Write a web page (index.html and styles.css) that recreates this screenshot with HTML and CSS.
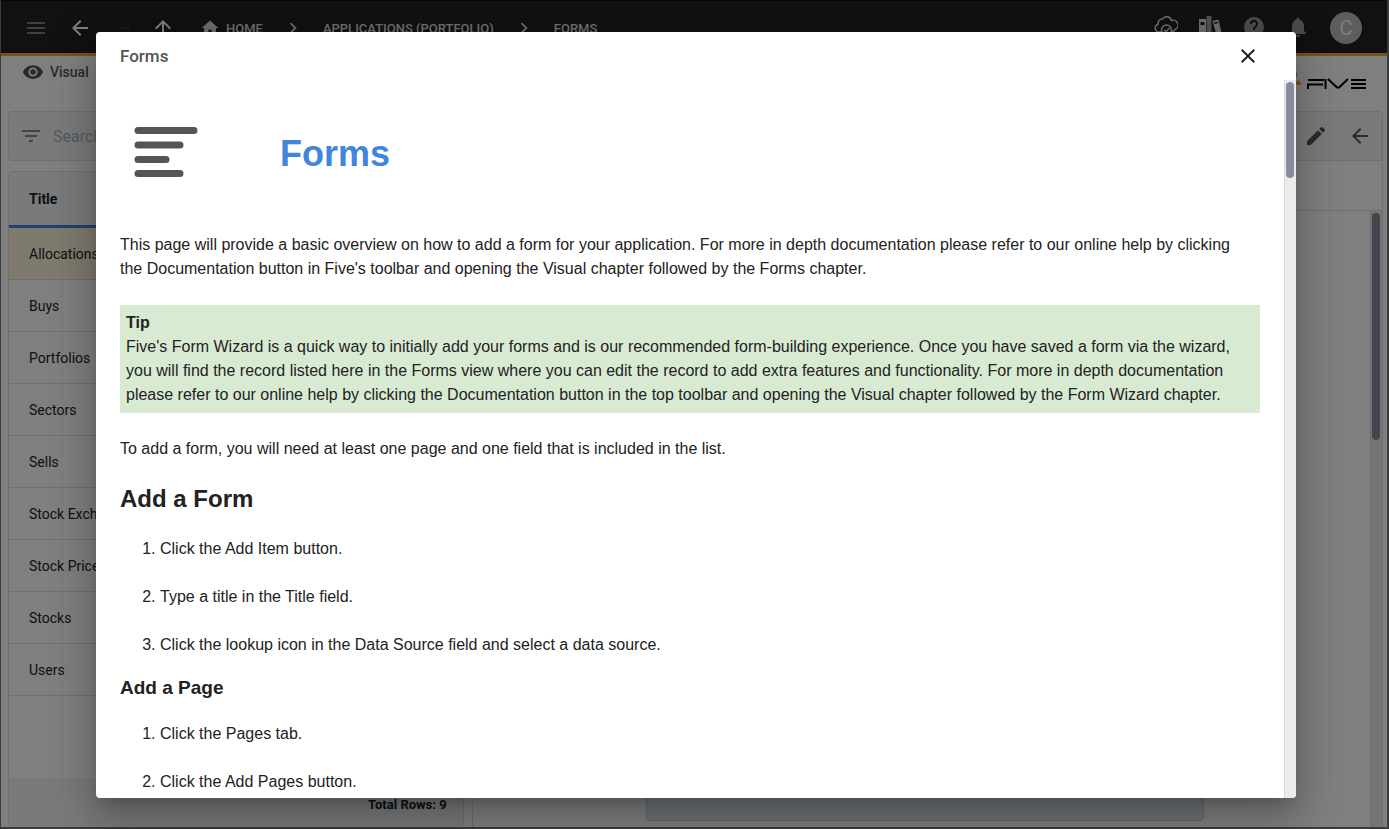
FILE: index.html
```html
<!DOCTYPE html>
<html lang="en">
    <head>
        <meta charset="utf-8">
        <title>Five - Forms</title>
        <link rel="stylesheet" href="styles.css">
    </head>

    <body>
        <div class="app">
            <header class="topbar">
                <button class="icon-btn menu" aria-label="Menu"><svg width="24" height="24" viewBox="0 0 24 24"><path d="M3 6h18v2H3zm0 5h18v2H3zm0 5h18v2H3z"/></svg></button>
                <button class="icon-btn" aria-label="Back"><svg width="24" height="24" viewBox="0 0 24 24"><path d="M20 11H7.8l5.6-5.6L12 4l-8 8 8 8 1.4-1.4L7.8 13H20z"/></svg></button>
                <button class="icon-btn off" aria-label="Forward"><svg width="24" height="24" viewBox="0 0 24 24"><path d="M4 11h12.2l-5.6-5.6L12 4l8 8-8 8-1.4-1.4 5.6-5.6H4z"/></svg></button>
                <button class="icon-btn up" aria-label="Up"><svg width="24" height="24" viewBox="0 0 24 24"><path d="M11 20V7.8l-5.6 5.6L4 12l8-8 8 8-1.4 1.4L13 7.8V20z"/></svg></button>
                <nav class="crumbs">
                    <a href="#"><svg width="20" height="20" viewBox="0 0 24 24"><path d="M10 20v-6h4v6h5v-8h3L12 3 2 12h3v8z"/></svg>HOME</a>
                    <svg width="22" height="22" viewBox="0 0 24 24"><path d="M8.6 16.6 13.2 12 8.6 7.4 10 6l6 6-6 6z"/></svg>
                    <a href="#">APPLICATIONS (PORTFOLIO)</a>
                    <svg width="22" height="22" viewBox="0 0 24 24"><path d="M8.6 16.6 13.2 12 8.6 7.4 10 6l6 6-6 6z"/></svg>
                    <a href="#">FORMS</a>
                </nav>
                <div class="tools">
                    <button class="icon-btn light" aria-label="Deploy"><svg width="24" height="24" viewBox="0 0 24 24"><g fill="none" stroke="currentColor" stroke-width="1.5"><path d="M7 18H5a4 4 0 0 1-1-7.800A4.500 4.500 0 0 1 8.500 5a5 5 0 0 1 9 1.500 4.500 4.500 0 0 1 3.500 9q-1 2-3 2.500"/><circle cx="12.500" cy="16" r="5"/><path d="m10 16 2 2 3.500-4"/></g></svg></button>
                    <button class="icon-btn light" aria-label="Documentation"><svg width="24" height="24" viewBox="0 0 24 24"><path fill-rule="evenodd" d="M1 5h7v18H1zm1.500 3v3h4V8zM14.500 7l6-1.500L24 21l-5 1.500zM16 8.500l.4 1.500 4-1-.4-1.500z"/><path d="M8.500 2h5v20h-5z" opacity=".7"/></svg></button>
                    <button class="icon-btn dim" aria-label="Help"><svg width="24" height="24" viewBox="0 0 24 24"><path d="M12 2a10 10 0 1 0 0 20 10 10 0 0 0 0-20zm1 17h-2v-2h2zm2.100-7.700-.9.900C13.500 12.900 13 13.500 13 15h-2v-.5c0-1.100.5-2.100 1.200-2.800l1.200-1.300A2 2 0 1 0 10 9H8a4 4 0 1 1 7.100 2.300z"/></svg></button>
                    <button class="icon-btn dim" aria-label="Notifications"><svg width="24" height="24" viewBox="0 0 24 24"><path d="M12 22a2 2 0 0 0 2-2h-4a2 2 0 0 0 2 2zm6-6v-5c0-3.100-1.600-5.600-4.500-6.300V4a1.500 1.500 0 0 0-3 0v.7C7.600 5.400 6 7.900 6 11v5l-2 2v1h16v-1z"/></svg></button>
                    <button class="avatar">C</button>
                </div>
            </header>

            <div class="subbar">
                <a class="visual" href="#"><svg width="22" height="22" viewBox="0 0 24 24"><path d="M12 4.500C7 4.500 2.700 7.600 1 12c1.700 4.400 6 7.500 11 7.500s9.300-3.100 11-7.500c-1.700-4.400-6-7.500-11-7.500zM12 17a5 5 0 1 1 0-10 5 5 0 0 1 0 10zm0-8a3 3 0 1 0 0 6 3 3 0 0 0 0-6z"/></svg>Visual</a>
                <svg class="logo" width="84" height="32" viewBox="0 0 84 32" aria-label="Five">
                    <path d="M6 4 14 4 15 10 9 14z" fill="#e8543c"/>
                    <path d="m10 19 6-5 4 4-4 1z" fill="#f5b41e"/>
                    <path d="M26 23v-4.500h15M26 14h16M43.500 13v10M46 13l9 8.500h2L66 13M84 14H69M69 22h15M69 18h15" fill="none" stroke="#000" stroke-width="2"/>
                </svg>
            </div>

            <main class="panels">
                <section class="list">
                    <label class="search">
                        <svg width="24" height="24" viewBox="0 0 24 24"><path d="M10 18h4v-2h-4zM3 6v2h18V6zm3 7h12v-2H6z"/></svg>
                        <input type="text" placeholder="Search" aria-label="Search">
                    </label>
                    <div class="grid">
                        <table>
                            <thead><tr><th>Title</th></tr></thead>
                            <tbody>
                                <tr class="selected"><td>Allocations</td></tr>
                                <tr><td>Buys</td></tr>
                                <tr><td>Portfolios</td></tr>
                                <tr><td>Sectors</td></tr>
                                <tr><td>Sells</td></tr>
                                <tr><td>Stock Exchanges</td></tr>
                                <tr><td>Stock Prices</td></tr>
                                <tr><td>Stocks</td></tr>
                                <tr><td>Users</td></tr>
                            </tbody>
                        </table>
                        <div class="total">Total Rows: 9</div>
                    </div>
                </section>

                <section class="detail">
                    <div class="detail-bar">
                        <button class="icon-btn" aria-label="Edit"><svg width="24" height="24" viewBox="0 0 24 24"><path d="M3 17.250V21h3.750L17.800 9.900 14.100 6.200zM20.700 7a1 1 0 0 0 0-1.400l-2.300-2.300a1 1 0 0 0-1.400 0l-1.800 1.800 3.700 3.700z"/></svg></button>
                        <button class="icon-btn" aria-label="Close form"><svg width="24" height="24" viewBox="0 0 24 24"><path d="M20 11H7.800l5.600-5.600L12 4l-8 8 8 8 1.400-1.400L7.800 13H20z"/></svg></button>
                    </div>
                    <div class="tabs"></div>
                    <div class="detail-body">
                        <div class="fields"><div class="field"></div></div>
                        <div class="scrollbar"><div class="thumb"></div></div>
                    </div>
                </section>
            </main>
        </div>

        <div class="backdrop">
            <div class="dialog" role="dialog" aria-labelledby="dialogTitle">
                <div class="dialog-head">
                    <span id="dialogTitle">Forms</span>
                    <button class="icon-btn" aria-label="Close"><svg width="24" height="24" viewBox="0 0 24 24"><path d="M19 6.400 17.600 5 12 10.600 6.400 5 5 6.400 10.600 12 5 17.600 6.400 19l5.600-5.600 5.600 5.600 1.400-1.400-5.600-5.600z"/></svg></button>
                </div>
                <div class="dialog-body">
                    <article class="help">
                        <div class="help-title">
                            <svg width="64" height="56" viewBox="0 0 64 56"><path d="M4 4.500h56M4 19h42M4 33.500h28M4 47.500h42" fill="none" stroke="#555" stroke-width="7" stroke-linecap="round"/></svg>
                            <h1>Forms</h1>
                        </div>
                        <p>This page will provide a basic overview on how to add a form for your application. For more in depth documentation please refer to our online help by clicking<br>the Documentation button in Five's toolbar and opening the Visual chapter followed by the Forms chapter.</p>
                        <div class="tip">
                            <b>Tip</b>
                            <div>Five's Form Wizard is a quick way to initially add your forms and is our recommended form-building experience. Once you have saved a form via the wizard, you will find the record listed here in the Forms view where you can edit the record to add extra features and functionality. For more in depth documentation please refer to our online help by clicking the Documentation button in the top toolbar and opening the Visual chapter followed by the Form Wizard chapter.</div>
                        </div>
                        <p>To add a form, you will need at least one page and one field that is included in the list.</p>
                        <h2>Add a Form</h2>
                        <ol>
                            <li>Click the Add Item button.</li>
                            <li>Type a title in the Title field.</li>
                            <li>Click the lookup icon in the Data Source field and select a data source.</li>
                        </ol>
                        <h3>Add a Page</h3>
                        <ol>
                            <li>Click the Pages tab.</li>
                            <li>Click the Add Pages button.</li>
                        </ol>
                    </article>
                    <div class="scrollbar"><div class="thumb"></div></div>
                </div>
            </div>
        </div>
    </body>
</html>
```
FILE: styles.css
```css
* {
    box-sizing: border-box;
}
body {
    margin: 0;
    height: 100vh;
    overflow: hidden;
    background: #777;
    font-family: Roboto, sans-serif;
    font-size: 14px;
    color: #222;
}
svg {
    display: block;
    fill: currentColor;
    flex: none;
}
a {
    color: inherit;
    text-decoration: none;
}
button {
    border: 0;
    padding: 0;
    background: none;
    color: inherit;
    font: inherit;
}

/* page behind the dialog */
.app {
    display: flex;
    flex-direction: column;
    height: 100vh;
    border: solid #777;
    border-width: 0 2px 2px 1px;
    background: #fff;
}
.topbar {
    display: flex;
    align-items: center;
    height: 56px;
    padding: 2px 25px 0 23px;
    border-top: 1px solid #0c0c0c;
    border-bottom: 3px solid #f0ac22;
    background: #222;
    color: #fff;
}
.icon-btn {
    display: block;
    margin-right: 20px;
}
.menu {
    color: #808080;
}
.off {
    color: #2e2e2e;
    margin-right: 15px;
}
.up {
    margin-right: 25px;
}
.crumbs {
    display: flex;
    flex: 1;
    align-items: center;
    gap: 19px;
    font-size: 13px;
    font-weight: 500;
    color: #ddd;
}
.crumbs a {
    display: flex;
    align-items: center;
    gap: 6px;
}
.tools {
    display: flex;
    align-items: center;
}
.light {
    color: #ddd;
    margin-bottom: 4px;
}
.dim {
    color: #999;
    margin-bottom: 2px;
}
.avatar {
    width: 32px;
    height: 32px;
    border-radius: 50%;
    background: #bdbdbd;
    color: #fafafa;
    font-size: 20px;
}
.subbar {
    display: flex;
    justify-content: space-between;
    padding: 5px 21px 0;
    height: 55px;
    flex: none;
}
.visual {
    display: flex;
    align-items: center;
    gap: 6px;
    height: 22px;
    font-weight: 500;
    color: #555;
}
.logo {
    margin-top: 5px;
}
.panels {
    display: grid;
    grid-template-columns: 1fr 2fr;
    gap: 8px;
    flex: 1;
    min-height: 0;
    padding: 0 4px 0 7px;
}
.list,
.detail {
    display: flex;
    flex-direction: column;
    min-height: 0;
}
.search {
    display: flex;
    align-items: center;
    gap: 8px;
    height: 50px;
    margin-bottom: 10px;
    padding: 0 10px;
    border: 1px solid #dcdfe2;
    border-radius: 4px;
    background: #f0f4f8;
    color: #888;
}
.search input {
    border: 0;
    background: none;
    font: 16px Roboto, sans-serif;
}
.search input::placeholder {
    color: #b0b4b8;
}
.grid {
    display: flex;
    flex-direction: column;
    flex: 1;
    border: 1px solid #dcdfe2;
    border-bottom: 0;
    border-radius: 4px 4px 0 0;
}
.grid table {
    border-spacing: 0;
    width: 100%;
}
.grid th {
    height: 56px;
    padding: 0 20px;
    border-bottom: 3px solid #4285dc;
    background: #f0f4f8;
    text-align: left;
    font-weight: 700;
}
.grid td {
    height: 52px;
    padding: 0 20px;
    border-bottom: 1px solid #dcdcdc;
}
.grid .selected {
    background: #fff4dc;
}
.total {
    height: 49px;
    margin-top: auto;
    padding: 0 16px;
    background: #f0f4f8;
    text-align: right;
    font-size: 13px;
    font-weight: 700;
    line-height: 54px;
}
.detail {
    border: 1px solid #dcdfe2;
    border-bottom: 0;
    border-radius: 4px 4px 0 0;
}
.detail-bar {
    display: flex;
    justify-content: flex-end;
    align-items: center;
    height: 49px;
    border-bottom: 1px solid #dcdfe2;
    background: #f0f4f8;
    color: #555;
}
.detail-bar .icon-btn {
    margin: 0 10px;
}
.tabs {
    height: 50px;
    border-bottom: 1px solid #dcdfe2;
}
.detail-body {
    display: flex;
    flex: 1;
}
.fields {
    display: flex;
    flex: 1;
    align-items: flex-end;
    justify-content: center;
    padding: 0 0 6px 8px;
}
.field {
    width: 558px;
    height: 60px;
    border: 1px solid #bccfe0;
    border-radius: 4px;
    background: #dde8f2;
}
.scrollbar {
    flex: none;
    width: 12px;
    padding: 2px 1px;
    border-left: 1px solid #d8d8d8;
    background: #ebebeb;
}
.thumb {
    width: 8px;
    height: 96px;
    border-radius: 4px;
    background: #858d9e;
}
.detail .thumb {
    height: 227px;
}

/* dialog */
.backdrop {
    position: absolute;
    inset: 0;
    padding: 32px 93px 31px 96px;
    background: rgba(0, 0, 0, 0.5);
}
.dialog {
    display: flex;
    flex-direction: column;
    height: 100%;
    overflow: hidden;
    border-radius: 4px;
    background: #fff;
    box-shadow: 0 11px 15px -7px rgba(0, 0, 0, 0.2), 0 24px 38px 3px rgba(0, 0, 0, 0.14), 0 9px 46px 8px rgba(0, 0, 0, 0.12);
}
.dialog-head {
    display: flex;
    justify-content: space-between;
    align-items: center;
    flex: none;
    height: 48px;
    padding: 0 16px 0 24px;
    font-size: 17px;
    font-weight: 500;
    color: #555;
}
.dialog-head .icon-btn {
    color: #222;
}
.dialog-body {
    display: flex;
    flex: 1;
    min-height: 0;
}
.help {
    flex: 1;
    overflow: hidden;
    padding: 0 24px;
    font: 16px/24px "Liberation Sans", Arial, sans-serif;
}
.help-title {
    display: flex;
    align-items: center;
    gap: 82px;
    height: 147px;
    padding-left: 14px;
}
.help h1 {
    margin: 0;
    font-size: 36px;
    color: #4285dc;
}
.help p {
    margin: 6px 0 24px;
}
.tip {
    margin-bottom: 24px;
    padding: 6px;
    background: #d9ead3;
}
.help h2 {
    margin: 26px 0;
    font-size: 24px;
}
.help h3 {
    margin: 19px 0 22px;
    font-size: 19px;
}
.help ol {
    margin: 0;
    padding-left: 40px;
}
.help li {
    margin-bottom: 24px;
}
.help li:last-child {
    margin-bottom: 0;
}
```
